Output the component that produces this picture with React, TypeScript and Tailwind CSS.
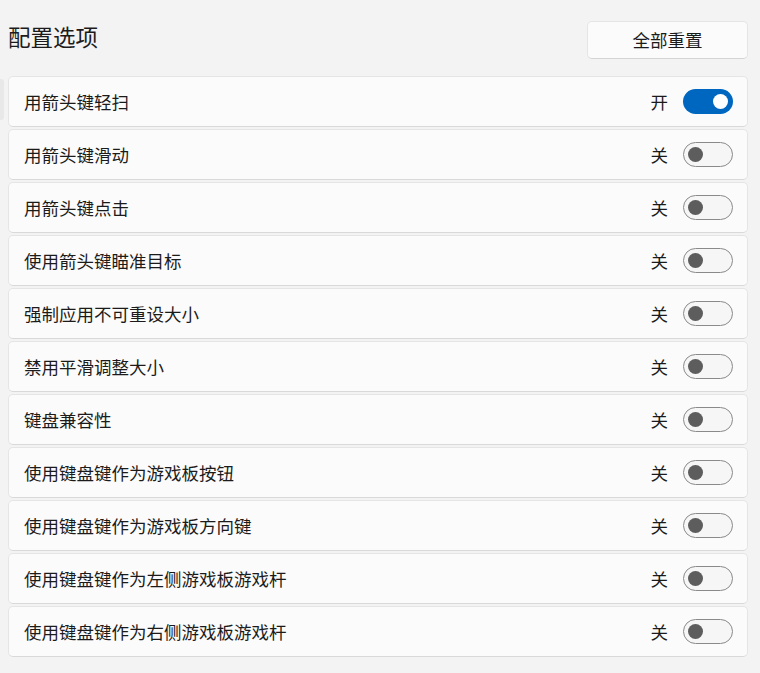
import React from "react";

const rows: [string, boolean][] = [
  ["用箭头键轻扫", true],
  ["用箭头键滑动", false],
  ["用箭头键点击", false],
  ["使用箭头键瞄准目标", false],
  ["强制应用不可重设大小", false],
  ["禁用平滑调整大小", false],
  ["键盘兼容性", false],
  ["使用键盘键作为游戏板按钮", false],
  ["使用键盘键作为游戏板方向键", false],
  ["使用键盘键作为左侧游戏板游戏杆", false],
  ["使用键盘键作为右侧游戏板游戏杆", false],
];

function Toggle({ on }: { on: boolean }) {
  return on ? (
    <div className="w-[50px] h-[25px] rounded-full bg-[#0067c0] flex items-center justify-end pr-[5px]">
      <div className="w-[15px] h-[15px] rounded-full bg-white" />
    </div>
  ) : (
    <div className="w-[50px] h-[25px] rounded-full border border-[#8a8a8a] bg-[#f6f6f6] flex items-center pl-[4px]">
      <div className="w-[15px] h-[15px] rounded-full bg-[#5d5d5d]" />
    </div>
  );
}

export default function App() {
  return (
    <div
      className="relative w-[760px] h-[673px] bg-[#f3f3f3] text-[#1b1b1b] px-[8px] pt-[21px] pr-[12px]"
      style={{ fontFamily: '"Noto Sans CJK SC", "Noto Sans", sans-serif' }}
    >
      <div className="absolute left-0 top-[79px] w-[4px] h-[41px] rounded-r-[3px] bg-[#e8e8e8]" />
      <div className="flex items-center justify-between h-[38px]">
        <div className="text-[22.5px] leading-none -mt-[7px]">配置选项</div>
        <button className="w-[161px] h-[38px] rounded-[5px] bg-[#fbfbfb] border border-[#e5e5e5] border-b-[#d4d4d4] text-[17.5px] leading-none">
          全部重置
        </button>
      </div>
      <div className="mt-[17px] flex flex-col gap-[2px]">
        {rows.map(([label, on]) => (
          <div
            key={label}
            className="h-[51px] rounded-[5px] bg-[#fbfbfb] border border-[#e5e5e5] border-b-[#d9d9d9] flex items-center pl-[15px] pr-[14px]"
          >
            <div className="flex-1 text-[17.5px] leading-none">{label}</div>
            <div className="text-[17.5px] leading-none mr-[15px]">{on ? "开" : "关"}</div>
            <Toggle on={on} />
          </div>
        ))}
      </div>
    </div>
  );
}
